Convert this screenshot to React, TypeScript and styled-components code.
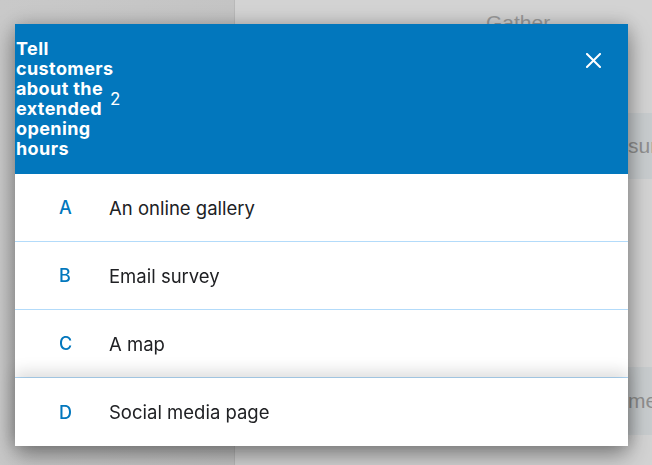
import React from "react";
import styled, { createGlobalStyle } from "styled-components";

const Global = createGlobalStyle`
  html, body { margin: 0; padding: 0; }
  body { font-family: "Inter", "Open Sans", sans-serif; overflow: hidden; }
`;

const Page = styled.div`
  display: flex;
  width: 652px;
  height: 465px;
  background: #d3d3d3;
`;

const SidePanel = styled.div`
  width: 234px;
  flex: none;
  background: linear-gradient(90deg, #c9c9c9, #c4c4c4);
  border-right: 1px solid #b9b9b9;
`;

const Main = styled.div`
  flex: 1;
  display: flex;
  flex-direction: column;
  padding: 10px 0 0 251px;
  overflow: hidden;
`;

const Heading = styled.div`
  font-family: "Liberation Sans", sans-serif;
  font-size: 21px;
  line-height: 26px;
  color: #9a9a9a;
  height: 103px;
`;

const GhostCard = styled.div<{ $h: number; $mt: number }>`
  height: ${(p) => p.$h}px;
  margin-top: ${(p) => p.$mt}px;
  background: #c8ccce;
  display: flex;
  align-items: center;
  padding-left: 142px;
  font-family: "Liberation Sans", sans-serif;
  font-size: 21px;
  color: #8f8f8f;
  white-space: nowrap;
`;

const Modal = styled.div`
  position: fixed;
  left: 15px;
  top: 24px;
  width: 613px;
  background: #fff;
  box-shadow: 0 10px 22px rgba(0, 0, 0, 0.35), 0 0 18px rgba(0, 0, 0, 0.18);
`;

const Header = styled.div`
  height: 150px;
  background: #0277bd;
  color: #fff;
  display: flex;
  align-items: center;
  padding-left: 1px;
  position: relative;
`;

const Title = styled.div`
  width: 92px;
  flex: none;
  font-size: 18px;
  font-weight: 700;
  line-height: 20px;
  letter-spacing: 0.4px;
`;

const Count = styled.span`
  margin-left: 2px;
  font-size: 17px;
  line-height: 20px;
`;

const Close = styled.button`
  position: absolute;
  right: 25px;
  top: 26px;
  width: 20px;
  height: 20px;
  padding: 0;
  border: 0;
  background: transparent;
  display: flex;
  align-items: center;
  justify-content: center;
`;

const Option = styled.div<{ $raised?: boolean }>`
  display: flex;
  align-items: center;
  height: 67px;
  border-bottom: 1px solid #b3dbfa;
  position: relative;
  background: #fff;
  ${(p) =>
    p.$raised &&
    `
    height: 68px;
    border-bottom: 0;
    z-index: 1;
    box-shadow: 0 -7px 14px rgba(0,0,0,0.13);
  `}
`;

const Letter = styled.span`
  width: 50px;
  margin-left: 44px;
  font-size: 18px;
  font-weight: 500;
  color: #0277bd;
`;

const Label = styled.span`
  font-size: 18.5px;
  color: #202124;
`;

const options = [
  { k: "A", t: "An online gallery" },
  { k: "B", t: "Email survey" },
  { k: "C", t: "A map" },
  { k: "D", t: "Social media page" },
];

export default function App() {
  return (
    <>
      <Global />
      <Page>
        <SidePanel />
        <Main>
          <Heading>Gather</Heading>
          <GhostCard $h={66} $mt={0}>sur</GhostCard>
          <GhostCard $h={68} $mt={188}>me</GhostCard>
        </Main>
      </Page>
      <Modal>
        <Header>
          <Title>Tell customers about the extended opening hours</Title>
          <Count>2</Count>
          <Close aria-label="Close">
            <svg width="15" height="15" viewBox="0 0 15 15">
              <path d="M1 1L14 14M14 1L1 14" stroke="#fff" strokeWidth="2" strokeLinecap="square" />
            </svg>
          </Close>
        </Header>
        {options.map((o, i) => (
          <Option key={o.k} $raised={i === 3}>
            <Letter>{o.k}</Letter>
            <Label>{o.t}</Label>
          </Option>
        ))}
      </Modal>
    </>
  );
}
